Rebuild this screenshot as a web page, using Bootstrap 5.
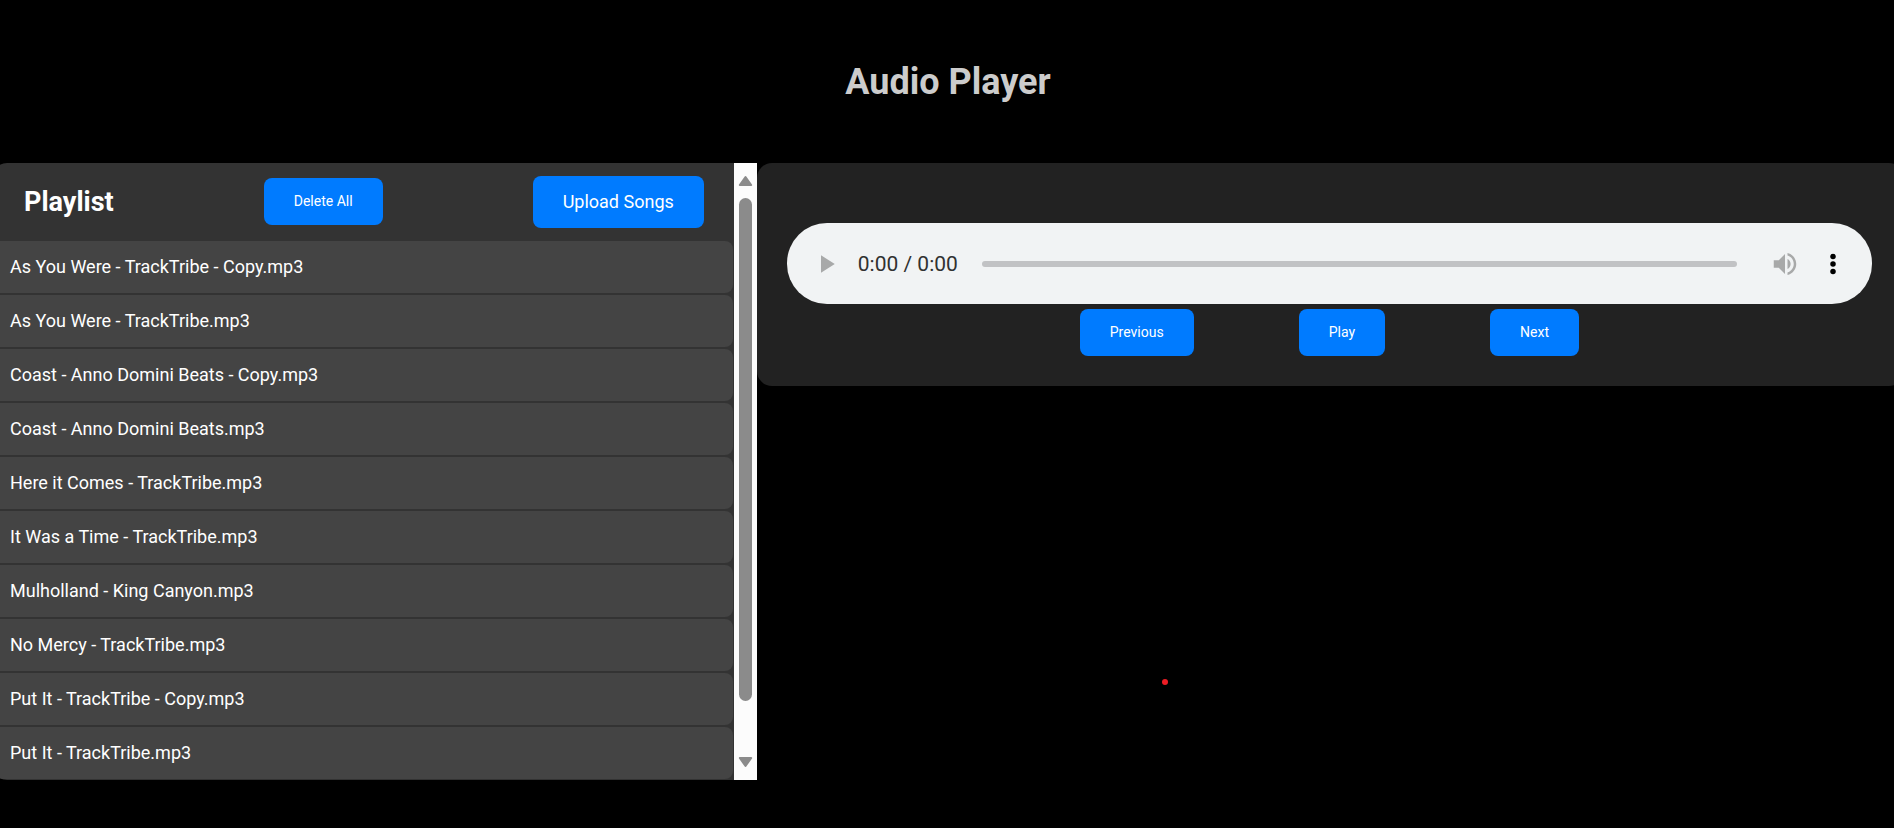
<!DOCTYPE html>
<html lang="en">
<head>
<meta charset="utf-8">
<meta name="viewport" content="width=device-width, initial-scale=1">
<title>Audio Player</title>
<link href="https://cdn.jsdelivr.net/npm/bootstrap@5.3.0/dist/css/bootstrap.min.css" rel="stylesheet">
<style>
  body { background: #000; color: #fff; font-family: Roboto, sans-serif; overflow-x: hidden; }
  .page-title { color: #ccc; font-size: 36px; line-height: 43px; padding: 61px 0 59px 2px; }
  .workspace { margin: 0 -10px 0 -8px; }
  .playlist-col { flex: 0 0 40%; min-width: 0; }
  .playlist-panel { background: #333; border-radius: 15px 0 0 15px; overflow: hidden; }
  .playlist-head { height: 77px; padding: 0 30px 0 32px; }
  .playlist-head h2 { font-size: 27px; line-height: 32px; }
  .songs { gap: 2px; padding: 1px; }
  .song { background: #444; border-radius: 8px; padding: 13px 17px; font-size: 18px; line-height: 26px; }
  .btn-play { --bs-btn-color: #fff; --bs-btn-bg: #007bff; --bs-btn-hover-color: #fff; --bs-btn-hover-bg: #0069d9;
    --bs-btn-padding-x: 30px; --bs-btn-padding-y: 15px; --bs-btn-font-size: 14px; --bs-btn-line-height: 17px;
    --bs-btn-border-width: 0; --bs-btn-border-radius: 8px; }
  .btn-upload { --bs-btn-font-size: 18px; --bs-btn-line-height: 22px; }
  .scroll-rail { width: 23px; background: #fcfcfc; padding: 12px 0; }
  .scroll-thumb { width: 13px; height: 503px; border-radius: 7px; background: #8b8b8b; margin-top: 11px; }
  .player-col { flex: 1 1 0; min-width: 0; }
  .player-panel { background: #222; border-radius: 15px; padding: 60px 32px 30px 30px; }
  .audio-bar { background: #f1f3f4; border-radius: 40px; height: 81px; padding: 0 24px; }
  .icon-btn { border: 0; background: none; padding: 0; display: flex; }
  .icon-btn + .icon-btn { margin-left: 18px; }
  .time { color: #303131; font-size: 21px; line-height: 24px; margin: 0 24px 0 17px; white-space: pre; }
  .seek { appearance: none; flex: 1 1 0; min-width: 0; height: 6px; border-radius: 3px; background: #c1c2c4; margin: 0 33px 0 0; }
  .seek::-webkit-slider-thumb { appearance: none; width: 0; height: 0; }
  .seek::-moz-range-thumb { width: 0; height: 0; border: 0; }
  .transport { gap: 105px; margin-top: 5px; }
  .marker { width: 6px; height: 6px; border-radius: 50%; background: #ed1c24; margin: 293px 0 0 405px; }
</style>
</head>
<body>
<header class="text-center">
  <h1 class="page-title fw-bold m-0">Audio Player</h1>
</header>
<main class="workspace d-flex align-items-start">
  <section class="playlist-col d-flex" aria-labelledby="playlist-title">
    <div class="playlist-panel flex-grow-1">
      <div class="playlist-head d-flex align-items-center justify-content-between">
        <h2 class="fw-bold m-0" id="playlist-title">Playlist</h2>
        <button type="button" class="btn btn-play">Delete All</button>
        <button type="button" class="btn btn-play btn-upload">Upload Songs</button>
      </div>
      <ul class="songs list-unstyled d-flex flex-column m-0">
        <li class="song">As You Were - TrackTribe - Copy.mp3</li>
        <li class="song">As You Were - TrackTribe.mp3</li>
        <li class="song">Coast - Anno Domini Beats - Copy.mp3</li>
        <li class="song">Coast - Anno Domini Beats.mp3</li>
        <li class="song">Here it Comes - TrackTribe.mp3</li>
        <li class="song">It Was a Time - TrackTribe.mp3</li>
        <li class="song">Mulholland - King Canyon.mp3</li>
        <li class="song">No Mercy - TrackTribe.mp3</li>
        <li class="song">Put It - TrackTribe - Copy.mp3</li>
        <li class="song">Put It - TrackTribe.mp3</li>
      </ul>
    </div>
    <div class="scroll-rail d-flex flex-column align-items-center flex-shrink-0" aria-hidden="true">
      <svg width="15" height="12" viewBox="0 0 15 12"><path d="M7.5 2 13.2 10H1.8z" fill="#8b8b8b" stroke="#8b8b8b" stroke-width="2" stroke-linejoin="round"/></svg>
      <div class="scroll-thumb"></div>
      <svg class="mt-auto" width="15" height="12" viewBox="0 0 15 12"><path d="M7.5 10 13.2 2H1.8z" fill="#8b8b8b" stroke="#8b8b8b" stroke-width="2" stroke-linejoin="round"/></svg>
    </div>
  </section>
  <section class="player-col" aria-label="Player">
    <div class="player-panel">
      <div class="audio-bar d-flex align-items-center">
        <button type="button" class="icon-btn" aria-label="Play audio">
          <svg width="30" height="30" viewBox="0 0 24 24" fill="#a8a9a9"><path d="M8 5v14l11-7z"/></svg>
        </button>
        <span class="time">0:00 / 0:00</span>
        <input type="range" class="seek" min="0" max="100" value="0" aria-label="Seek">
        <button type="button" class="icon-btn" aria-label="Mute">
          <svg width="30" height="30" viewBox="0 0 24 24" fill="#a8a9a9"><path d="M3 9v6h4l5 5V4L7 9H3zm13.5 3c0-1.77-1.02-3.29-2.5-4.03v8.05c1.48-.73 2.5-2.25 2.5-4.02zM14 3.23v2.06c2.89.86 5 3.54 5 6.71s-2.11 5.85-5 6.71v2.06c4.01-.91 7-4.49 7-8.77s-2.99-7.86-7-8.77z"/></svg>
        </button>
        <button type="button" class="icon-btn" aria-label="More options">
          <svg width="30" height="30" viewBox="0 0 24 24" fill="#000"><circle cx="12" cy="6" r="2.200"/><circle cx="12" cy="12" r="2.200"/><circle cx="12" cy="18" r="2.200"/></svg>
        </button>
      </div>
      <div class="transport d-flex justify-content-center">
        <button type="button" class="btn btn-play">Previous</button>
        <button type="button" class="btn btn-play">Play</button>
        <button type="button" class="btn btn-play">Next</button>
      </div>
    </div>
    <div class="marker"></div>
  </section>
</main>
<script src="https://cdn.jsdelivr.net/npm/bootstrap@5.3.0/dist/js/bootstrap.bundle.min.js"></script>
</body>
</html>
